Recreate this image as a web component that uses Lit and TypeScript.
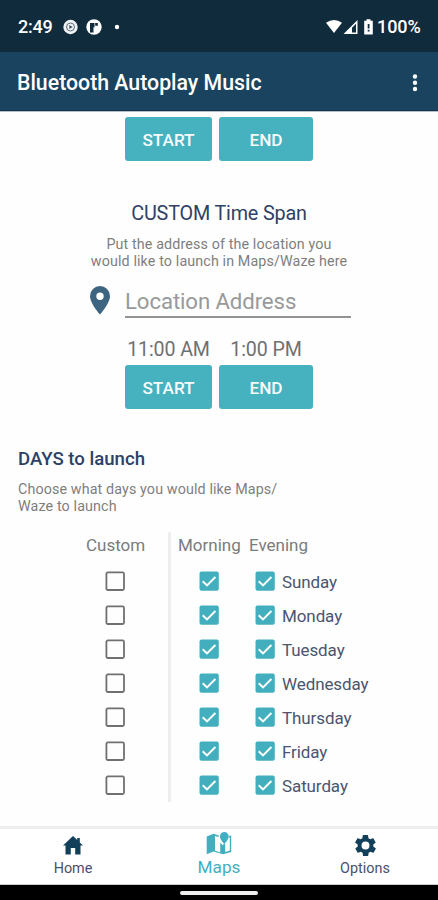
import { LitElement, html, css, svg } from "lit";
import { customElement, property } from "lit/decorators.js";

const DAYS = ["Sunday", "Monday", "Tuesday", "Wednesday", "Thursday", "Friday", "Saturday"];

@customElement("check-box")
class CheckBox extends LitElement {
  @property({ type: Boolean }) checked = false;
  static styles = css`
    :host { display: block; width: 20px; height: 20px; }
    svg { display: block; }
  `;
  render() {
    return html`<svg width="20" height="20" viewBox="0 0 20 20">
      ${this.checked
        ? svg`<rect x=".5" y=".5" width="19.3" height="19.3" rx="2" fill="#43afbe"/><path d="M3.7 10.2 8 14.4 16.4 6" fill="none" stroke="#fff" stroke-width="2"/>`
        : svg`<rect x="1.4" y="1.4" width="17.6" height="17.6" rx="1.5" fill="none" stroke="#707070" stroke-width="1.8"/>`}
    </svg>`;
  }
}

@customElement("app-root")
class AppRoot extends LitElement {
  static styles = css`
    :host { display: flex; flex-direction: column; width: 438px; height: 900px; background: #fefefe; font-family: Roboto, sans-serif; color: #777; overflow: hidden; }
    * { box-sizing: border-box; }
    svg { display: block; flex: none; }
    .status { height: 52px; flex: none; background: #102b3c; color: #fff; display: flex; align-items: center; padding: 2px 17px 0 18px; font: 500 18px/20px Roboto, sans-serif; }
    .clock { width: 45px; letter-spacing: -.2px; }
    .gap { flex: 1; }
    .pct { letter-spacing: -.1px; width: 44px; margin-left: 3px; white-space: nowrap; }
    .bar { height: 59px; flex: none; background: #19435f; border-bottom: 1px solid #123651; color: #fff; display: flex; align-items: center; justify-content: space-between; padding: 3px 20px 0 17px; font-size: 21.3px; font-weight: 500; white-space: nowrap; }
    .main { flex: 1; min-height: 0; border-top: 1px solid #b6bfc7; padding-top: 5px; }
    .buttons { display: flex; gap: 7px; padding-left: 125px; }
    .btn { height: 44px; border-radius: 3px; background: #46b1bf; color: #f6fcfd; font-weight: 500; font-size: 17.2px; line-height: 47px; text-align: center; }
    .start { width: 87px; }
    .end { width: 94px; }
    .title { margin-top: 41px; height: 24px; line-height: 24px; font-size: 19.8px; color: #2f4166; text-align: center; letter-spacing: -.17px; }
    .sub { margin-top: 10px; font-size: 14.3px; line-height: 17px; text-align: center; letter-spacing: .12px; color: #7e7e7e; white-space: nowrap; }
    .addr { margin: 13px 0 0 90px; height: 35px; display: flex; }
    .addr svg { margin-top: 3px; }
    .field { margin-left: 15px; width: 226px; height: 35px; border-bottom: 2px solid #929292; font-size: 22.2px; line-height: 36px; letter-spacing: -.1px; color: #999; }
    .times { display: flex; height: 47px; padding: 19px 0 0 125px; gap: 7px; font-size: 19.6px; line-height: 26px; text-align: center; letter-spacing: -.1px; color: #707070; white-space: nowrap; }
    .h2 { margin: 38px 0 0 18px; height: 24px; line-height: 24px; font-size: 18.6px; font-weight: 500; color: #2c4166; }
    .left { margin: 10px 0 0 18px; text-align: left; }
    .table { margin-top: 17px; display: flex; height: 270px; padding-left: 78px; }
    .col { width: 93px; border-right: 3px solid #eee; }
    .head { height: 32px; padding-top: 3px; line-height: 20px; font-size: 17px; color: #7b7b7b; white-space: nowrap; }
    .col .head { padding-left: 8px; }
    .heads { display: grid; grid-template-columns: 71px auto; padding-left: 7px; }
    .row { height: 34.05px; display: flex; align-items: center; }
    .col .row { padding-left: 27px; }
    .days .row { padding-left: 28px; }
    .second { margin-left: 36px; }
    .day { margin-left: 7px; font-size: 17px; line-height: 20px; padding-top: 2px; letter-spacing: -.1px; color: #4a556f; white-space: nowrap; }
    .nav { height: 59px; flex: none; border-top: 3px solid #eee; border-bottom: 1px solid #ccc; background: #fff; display: grid; grid-template-columns: repeat(3, 1fr); }
    .item { display: flex; flex-direction: column; align-items: center; font-size: 14.4px; line-height: 18px; color: #4a5068; padding-top: 6px; }
    .item svg { height: 21px; margin-bottom: 4px; }
    .active { font-size: 17.2px; color: #43afbe; padding-top: 3px; }
    .active svg { height: 23px; margin-bottom: 3px; }
    .system { height: 15px; flex: none; background: #000; display: flex; justify-content: center; padding-top: 6px; }
    .handle { width: 78px; height: 4px; border-radius: 2px; background: #eee; }
  `;

  buttons() {
    return html`<div class="buttons"><div class="btn start">START</div><div class="btn end">END</div></div>`;
  }

  render() {
    return html`
      <div class="status">
        <div class="clock">2:49</div>
        <svg width="60" height="16" viewBox="0 0 60 16">
          <circle cx="7.5" cy="8" r="7.2" fill="#f0f3f5"/><circle cx="7.5" cy="8" r="4" fill="none" stroke="#5c6d79" stroke-width="1"/><path d="M6.3 6 9.6 8 6.3 10z" fill="#3c505e"/>
          <circle cx="31" cy="8" r="7.7" fill="#fff"/><path d="M27 4h4.500v4.300h-1v5.200H27zM32.200 4h2.600v2.800h-2.600z" fill="#102b3c"/>
          <circle cx="54" cy="8" r="2.2" fill="#fff"/>
        </svg>
        <div class="gap"></div>
        <svg width="48" height="16" viewBox="0 0 48 16" fill="#fff">
          <path d="M0 3.8Q8-1.8 16 3.8L8 14z"/>
          <path d="M31.5 1v14H17.5zM30 4.8l-4 4V13.6h4z" fill-rule="evenodd"/>
          <path d="M40.5 .2h4v1.5h2.3v13.8h-8.6V1.7h2.3zM41.7 5v4.4h1.8V5zM41.7 10.7v1.7h1.8v-1.7z" fill-rule="evenodd"/>
        </svg>
        <div class="pct">100%</div>
      </div>
      <div class="bar">
        <span>Bluetooth Autoplay Music</span>
        <svg width="6" height="18" viewBox="0 0 6 18" fill="#fff"><circle cx="3" cy="2.5" r="2.2"/><circle cx="3" cy="8.7" r="2.2"/><circle cx="3" cy="15" r="2.2"/></svg>
      </div>
      <div class="main">
        ${this.buttons()}
        <div class="title">CUSTOM Time Span</div>
        <div class="sub">Put the address of the location you<br>would like to launch in Maps/Waze here</div>
        <div class="addr">
          <svg width="20" height="29" viewBox="0 0 20 29"><path d="M10 0A10 10 0 0 0 0 10C0 17.5 10 28.5 10 28.5S20 17.5 20 10A10 10 0 0 0 10 0zm0 6.5a3.7 3.7 0 1 1 0 7.4 3.7 3.7 0 0 1 0-7.4z" fill="#3d6481"/></svg>
          <div class="field">Location Address</div>
        </div>
        <div class="times"><div class="start">11:00 AM</div><div class="end">1:00 PM</div></div>
        ${this.buttons()}
        <div class="h2">DAYS to launch</div>
        <div class="sub left">Choose what days you would like Maps/<br>Waze to launch</div>
        <div class="table">
          <div class="col">
            <div class="head">Custom</div>
            ${DAYS.map(() => html`<div class="row"><check-box></check-box></div>`)}
          </div>
          <div class="days">
            <div class="head heads"><span>Morning</span><span>Evening</span></div>
            ${DAYS.map((d) => html`<div class="row"><check-box checked></check-box><check-box class="second" checked></check-box><span class="day">${d}</span></div>`)}
          </div>
        </div>
      </div>
      <div class="nav">
        <div class="item">
          <svg width="20" height="21" viewBox="0 0 20 21"><path d="M10 1 0 10.5h2.5V19.5h5.3v-6.5h4.4v6.5h5.3v-9H20L16.8 7.4V3h-2.6v2z" fill="#123f5a"/></svg>
          <span>Home</span>
        </div>
        <div class="item active">
          <svg width="26" height="23" viewBox="0 0 26 23" fill="#43afbe"><path d="M.7 4.500 7.500 1.800V19.500L.7 22.300zM7.500 1.800l5.300 1.700V5L9 3.900v14.700l5.200 2V10.500l2.800 3V22.300L7.500 19.500zM17 12.500V22.300l8.200-2.300V3.500l-2.400.6v1.400l1-.3v13.400l-4.600 1.400v-8.200z"/><path d="M18.300 0a4.400 4.400 0 0 0-4.400 4.400c0 3 4.400 7.600 4.400 7.600s4.400-4.600 4.400-7.600A4.400 4.400 0 0 0 18.300 0z"/></svg>
          <span>Maps</span>
        </div>
        <div class="item">
          <svg width="21" height="21" viewBox="2 2 20 20"><path d="M19.4 13a7.5 7.5 0 0 0 0-2l2.1-1.6c.2-.2.2-.4.1-.6l-2-3.5c-.1-.2-.4-.3-.6-.2l-2.5 1a7.3 7.3 0 0 0-1.7-1l-.4-2.6c0-.3-.2-.5-.5-.5h-4c-.2 0-.4.2-.5.5l-.4 2.6a7.700 7.700 0 0 0-1.700 1l-2.500-1c-.2-.1-.5 0-.6.2l-2 3.500c-.1.2 0 .4.1.6L4.600 11a7.500 7.500 0 0 0 0 2l-2.100 1.600c-.2.2-.2.4-.1.6l2 3.500c.1.2.4.3.6.2l2.500-1c.5.4 1.100.7 1.700 1l.4 2.600c0 .3.2.5.5.5h4c.2 0 .4-.2.5-.5l.4-2.600c.6-.3 1.200-.6 1.700-1l2.500 1c.2.1.5 0 .6-.2l2-3.500c.1-.2.1-.4-.1-.6zM12 15.800a3.800 3.800 0 1 1 0-7.600 3.800 3.800 0 0 1 0 7.600z" fill="#123f5a"/></svg>
          <span>Options</span>
        </div>
      </div>
      <div class="system"><div class="handle"></div></div>
    `;
  }
}
